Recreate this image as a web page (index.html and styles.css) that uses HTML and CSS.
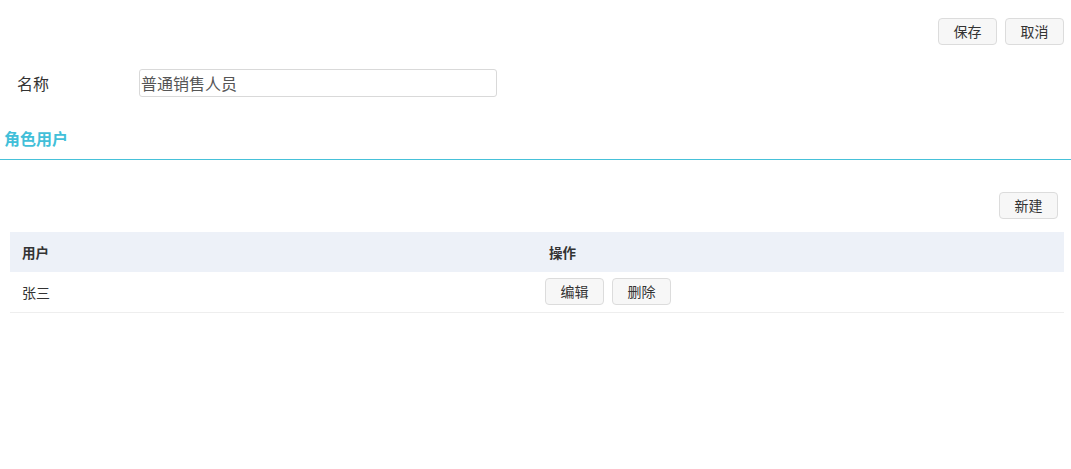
FILE: index.html
```html
<!DOCTYPE html>
<html lang="zh">
<head>
<meta charset="utf-8">
<link rel="stylesheet" href="styles.css">
</head>
<body>
<div class="page">
  <div class="toolbar">
    <button class="btn">保存</button>
    <button class="btn">取消</button>
  </div>
  <div class="form-row">
    <label class="label">名称</label>
    <input class="input" type="text" value="普通销售人员">
  </div>
  <div class="section-title">角色用户</div>
  <div class="section">
    <div class="toolbar2">
      <button class="btn">新建</button>
    </div>
    <table class="table">
      <thead>
        <tr><th>用户</th><th>操作</th></tr>
      </thead>
      <tbody>
        <tr>
          <td>张三</td>
          <td class="ops"><button class="btn">编辑</button><button class="btn">删除</button></td>
        </tr>
      </tbody>
    </table>
  </div>
</div>
</body>
</html>
```

FILE: styles.css
```css
* { box-sizing: border-box; }
html, body { margin: 0; padding: 0; background: #fff; }
body {
  font-family: "Noto Sans CJK SC", "Noto Sans", sans-serif;
  color: #333;
  font-size: 14px;
}
.page { width: 1071px; }
.btn {
  font-family: inherit;
  font-size: 14px;
  color: #333;
  height: 27px;
  width: 59px;
  padding: 0;
  border: 1px solid #dcdcdc;
  border-radius: 4px;
  background: #f7f7f7;
  line-height: 25px;
}
.toolbar {
  display: flex;
  justify-content: flex-end;
  gap: 8px;
  padding: 18px 7px 0 0;
}
.form-row {
  display: flex;
  align-items: center;
  margin-top: 24px;
  height: 28px;
}
.label {
  width: 139px;
  padding-left: 17px;
  font-size: 16px;
  color: #333;
}
.input {
  width: 358px;
  height: 28px;
  border: 1px solid #d9d9d9;
  border-radius: 3px;
  padding: 0 1px;
  font-family: inherit;
  font-size: 16px;
  color: #555;
}
.section-title {
  margin-top: 30px;
  padding-left: 4px;
  font-size: 16px;
  font-weight: bold;
  color: #42bfd9;
  height: 22px;
  line-height: 22px;
}
.section {
  border-top: 1px solid #46c1d9;
  margin-top: 10px;
  padding: 0 7px 0 10px;
}
.toolbar2 {
  display: flex;
  justify-content: flex-end;
  padding: 32px 6px 0 0;
  margin-bottom: 13px;
}
.table {
  width: 100%;
  border-collapse: collapse;
  table-layout: fixed;
}
.table th {
  background: #edf1f8;
  height: 40px;
  text-align: left;
  font-size: 13.5px;
  font-weight: bold;
  padding: 0 12px;
  color: #333;
}
.table td {
  height: 40px;
  padding: 0 12px;
  font-size: 14px;
  border-bottom: 1px solid #eeeeee;
}
.table td.ops { padding-left: 8px; }
.ops .btn { margin-right: 8px; }
```
